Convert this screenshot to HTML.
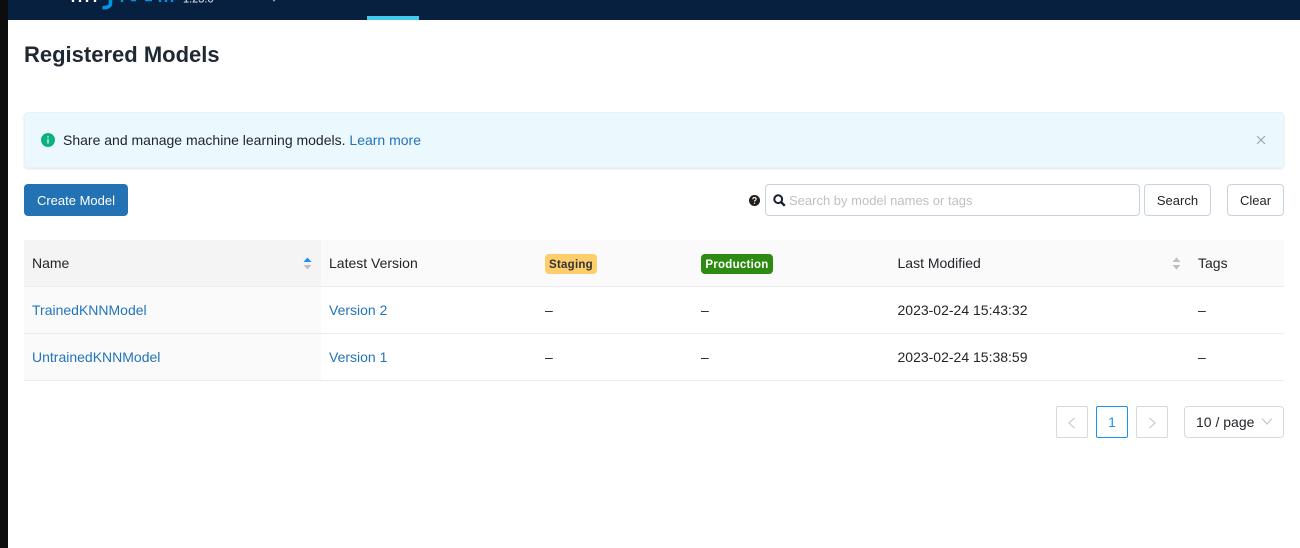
<!DOCTYPE html>
<html lang="en">
<head>
<meta charset="utf-8">
<title>MLflow</title>
<style>
*{box-sizing:border-box}
html,body{margin:0;padding:0;width:1300px;height:548px;overflow:hidden;background:#fff;font-family:"Liberation Sans",sans-serif;font-size:14px;color:#212529}
.abs{position:absolute;white-space:nowrap}
#side{left:0;top:0;width:8px;height:548px;background:#0d0d0d}
#top{left:8px;top:0;width:1292px;height:20px;background:#082040;overflow:hidden}
#tab{left:367px;top:16px;width:52px;height:4px;background:#43c9ed}
h1{margin:0;font-size:22px;line-height:26px;font-weight:700;left:24px;top:42px;color:#1f2933}
#alert{left:24px;top:112px;width:1260px;height:56px;background:#ebf9fe;border:1px solid #e8f1f4;border-radius:4px;box-shadow:0 1px 2px rgba(0,0,0,.12)}
a{color:#2374bb;text-decoration:none}
#btn{left:24px;top:184px;width:104px;height:32px;background:#2272b4;border-radius:4px;color:#fff;font-size:13px;line-height:33px;text-align:center}
.box{border:1px solid #c5d3e0;border-radius:4px;height:32px;background:#fff;top:184px;font-size:13px;line-height:30px;text-align:center;color:#212529}
#thead{left:24px;top:240px;width:1260px;height:47px;background:#fafafa;border-bottom:1px solid #ececec}
#namehd{left:24px;top:240px;width:297px;height:47px;background:#f4f4f4;border-bottom:1px solid #ececec}
#namecol{left:24px;top:287px;width:297px;height:94px;background:#fafafa}
.line{left:24px;width:1260px;height:1px;background:#ececec}
.t{line-height:20px;height:20px}
.tag{height:20px;border-radius:4px;font-size:11.5px;font-weight:700;line-height:22px;text-align:center;letter-spacing:.25px}
.pg{top:406px;width:32px;height:32px;border:1px solid #d9d9d9;border-radius:2px;text-align:center;line-height:31px;background:#fff}
</style>
</head>
<body>
<div class="abs" id="side"></div>
<div class="abs" id="top"></div>
<svg class="abs" style="left:60px;top:0" width="240" height="20" viewBox="0 0 240 20">
<path d="M13 0v2M20 0v2M27 0v2M35 0v2" stroke="#fff" stroke-width="2.400" fill="none"/>
<path d="M50.500 0V3.500Q50.500 7.500 42.500 7.800" stroke="#0194e2" stroke-width="3.600" fill="none"/>
<path d="M62 0v2M71 0h5M85 0h7M100 0v2M106 0v2M112 0v2" stroke="#0194e2" stroke-width="2.400" fill="none"/>
<path d="M214 0v1.200" stroke="#fff" stroke-width="1.200" fill="none"/>
<text x="123" y="2.500" font-family="Liberation Sans, sans-serif" font-size="11" fill="#e8edf3">1.23.0</text>
</svg>
<div class="abs" id="tab"></div>

<h1 class="abs">Registered Models</h1>

<div class="abs" id="alert"></div>
<svg class="abs" style="left:41px;top:133px" width="14" height="14" viewBox="0 0 14 14">
<circle cx="7" cy="7" r="7" fill="#0db27f"/>
<rect x="6.300" y="3.200" width="1.400" height="1.400" fill="#fff" opacity=".8"/>
<rect x="6.300" y="5.800" width="1.400" height="4.800" fill="#fff" opacity=".8"/>
</svg>
<div class="abs t" style="left:63px;top:130px">Share and manage machine learning models. <a href="#">Learn more</a></div>
<svg class="abs" style="left:1256px;top:135px" width="10" height="10" viewBox="0 0 10 10">
<path d="M1 1l8 8M9 1l-8 8" stroke="#98a2a6" stroke-width="1" fill="none"/>
</svg>

<div class="abs" id="btn">Create Model</div>

<svg class="abs" style="left:749px;top:195px" width="11" height="11" viewBox="0 0 11 11">
<circle cx="5.500" cy="5.500" r="5.500" fill="#1f1f1f"/>
<path d="M3.800 4.200q0-1.600 1.700-1.600t1.700 1.500q0 .8-.9 1.300-.8.4-.8 1.100" stroke="#fff" stroke-width="1.100" fill="none"/>
<rect x="4.900" y="7.600" width="1.200" height="1.200" fill="#fff"/>
</svg>
<div class="abs box" style="left:765px;width:375px"></div>
<svg class="abs" style="left:773px;top:194px" width="13" height="13" viewBox="0 0 13 13">
<circle cx="5.200" cy="5.200" r="3.900" stroke="#16202c" stroke-width="2" fill="none"/>
<path d="M8 8l3.800 3.800" stroke="#16202c" stroke-width="2.400" fill="none"/>
</svg>
<div class="abs" style="left:789px;top:191px;font-size:13px;line-height:20px;color:#bfbfbf">Search by model names or tags</div>
<div class="abs box" style="left:1144px;width:67px;line-height:31px">Search</div>
<div class="abs box" style="left:1227px;width:57px;line-height:31px">Clear</div>

<div class="abs" id="thead"></div>
<div class="abs" id="namehd"></div>
<div class="abs" id="namecol"></div>
<div class="abs line" style="top:333px"></div>
<div class="abs line" style="top:380px"></div>

<div class="abs t" style="left:32px;top:253px">Name</div>
<svg class="abs" style="left:303px;top:257px" width="9" height="13" viewBox="0 0 9 13">
<path d="M4.500 0.500L8.500 5H.5z" fill="#1890ff"/>
<path d="M4.500 12.500L8.500 8H.5z" fill="#bfbfbf"/>
</svg>
<div class="abs t" style="left:329px;top:253px">Latest Version</div>
<div class="abs tag" style="left:545px;top:254px;width:52px;background:#fdce6b;color:#333">Staging</div>
<div class="abs tag" style="left:701px;top:254px;width:72px;background:#2e8b12;color:#fff">Production</div>
<div class="abs t" style="left:897.500px;top:253px">Last Modified</div>
<svg class="abs" style="left:1172px;top:257px" width="9" height="13" viewBox="0 0 9 13">
<path d="M4.500 0.500L8.500 5H.5z" fill="#bfbfbf"/>
<path d="M4.500 12.500L8.500 8H.5z" fill="#bfbfbf"/>
</svg>
<div class="abs t" style="left:1198px;top:253px">Tags</div>

<a href="#" class="abs t" style="left:32px;top:300px">TrainedKNNModel</a>
<a href="#" class="abs t" style="left:329px;top:300px">Version 2</a>
<div class="abs t" style="left:545px;top:300px">–</div>
<div class="abs t" style="left:701px;top:300px">–</div>
<div class="abs t" style="left:897.500px;top:300px">2023-02-24 15:43:32</div>
<div class="abs t" style="left:1198px;top:300px">–</div>

<a href="#" class="abs t" style="left:32px;top:347px">UntrainedKNNModel</a>
<a href="#" class="abs t" style="left:329px;top:347px">Version 1</a>
<div class="abs t" style="left:545px;top:347px">–</div>
<div class="abs t" style="left:701px;top:347px">–</div>
<div class="abs t" style="left:897.500px;top:347px">2023-02-24 15:38:59</div>
<div class="abs t" style="left:1198px;top:347px">–</div>

<div class="abs pg" style="left:1056px"></div>
<svg class="abs" style="left:1067px;top:417px" width="10" height="12" viewBox="0 0 10 12">
<path d="M7.500 1L2 6l5.500 5" stroke="#c4c4c4" stroke-width="1.100" fill="none"/>
</svg>
<div class="abs pg" style="left:1096px;border-color:#1890ff;color:#1890ff">1</div>
<div class="abs pg" style="left:1136px"></div>
<svg class="abs" style="left:1147px;top:417px" width="10" height="12" viewBox="0 0 10 12">
<path d="M2.500 1L8 6l-5.500 5" stroke="#c4c4c4" stroke-width="1.100" fill="none"/>
</svg>
<div class="abs" style="left:1184px;top:406px;width:100px;height:32px;border:1px solid #d9d9d9;border-radius:4px;background:#fff"></div>
<div class="abs t" style="left:1196px;top:412px">10 / page</div>
<svg class="abs" style="left:1261px;top:417px" width="12" height="9" viewBox="0 0 12 9">
<path d="M1 1.500l5 5.500 5-5.500" stroke="#c4c4c4" stroke-width="1.100" fill="none"/>
</svg>
</body>
</html>
